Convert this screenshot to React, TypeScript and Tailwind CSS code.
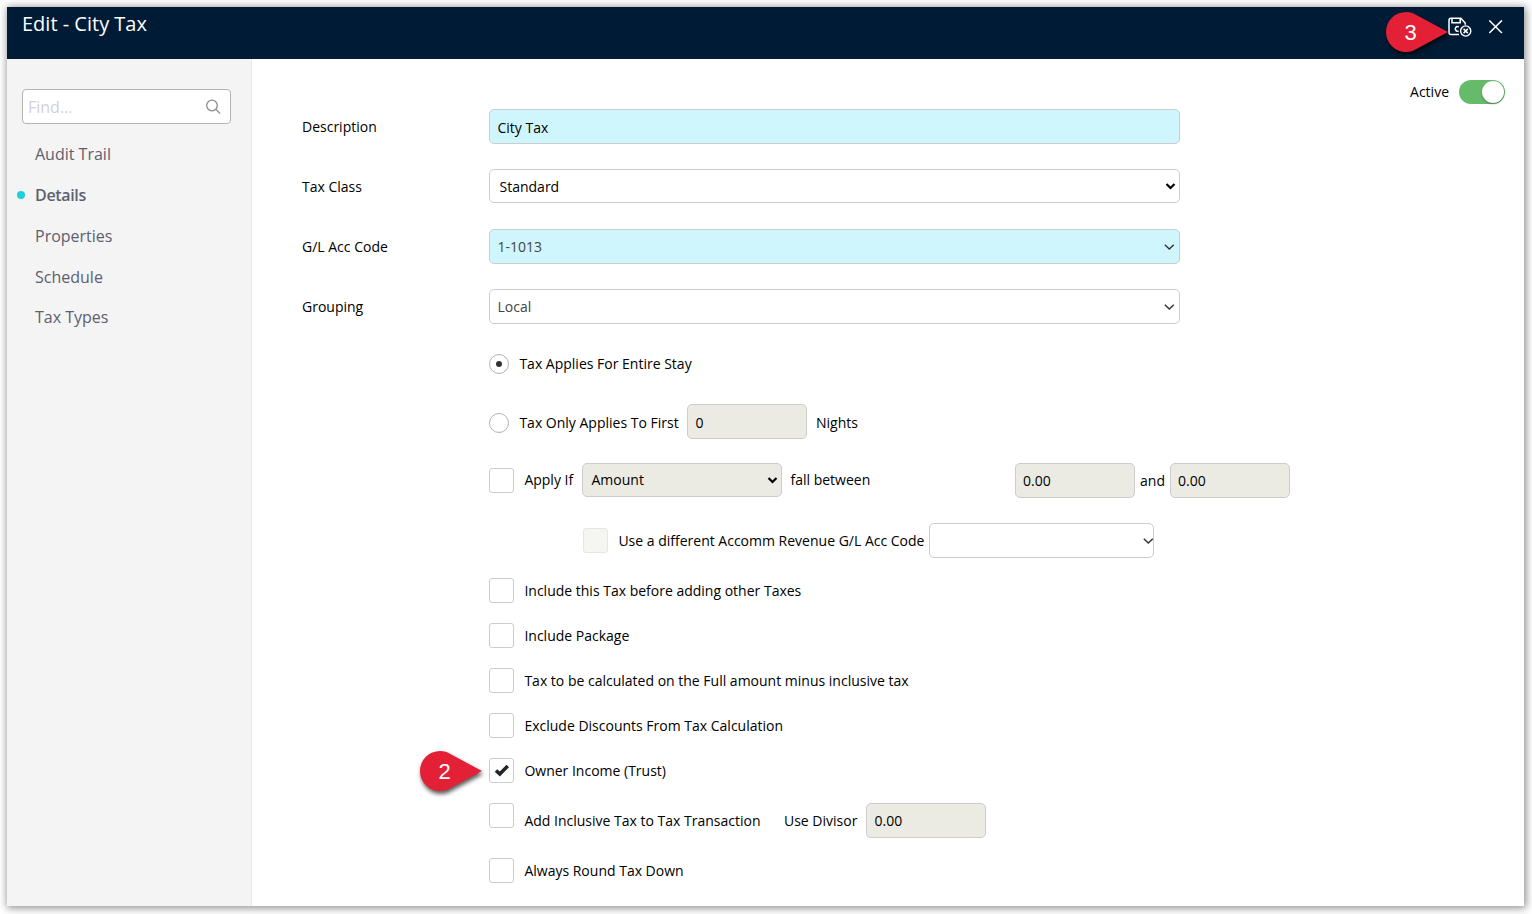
import type { ReactNode } from 'react'

const menu = ['Audit Trail', 'Details', 'Properties', 'Schedule', 'Tax Types']

function Pin({ label, className }: { label: string; className: string }) {
  return (
    <div className={`absolute h-10 w-[63px] ${className}`}>
      <svg
        viewBox="0 0 63 40"
        className="absolute inset-0 h-10 w-[63px] overflow-visible drop-shadow-[1px_3px_2px_rgba(0,0,0,0.65)]"
      >
        <path
          d="M62 20 L29 2.200 C26.500 0.800 23.500 0 20 0 A20 20 0 0 0 20 40 C23.500 40 26.500 39.200 29 37.800 Z"
          fill="#e32036"
        />
      </svg>
      <span className="relative block w-[49px] text-center font-['Liberation_Sans',sans-serif] text-[22px] leading-[41px] text-white">
        {label}
      </span>
    </div>
  )
}

function SaveCloseIcon() {
  return (
    <svg width="24" height="22" viewBox="0 0 24 22" fill="none" stroke="#fff" strokeWidth="1.500">
      <path d="M11 17.500H3C1.700 17.500 1 16.800 1 15.500V3.200C1 1.900 1.700 1.200 3 1.200h9.800L17.200 6v1.700" />
      <path d="M4 1.500v4.200h8.200V1.500" />
      <path d="M10.600 10.100a2 2.300 0 1 0 0 3.600" strokeWidth="1.500" />
      <circle cx="17.700" cy="14" r="5.100" strokeWidth="1.400" />
      <path d="M15.600 11.900l4.200 4.200M19.800 11.900l-4.200 4.200" strokeWidth="1.500" />
    </svg>
  )
}

function Chevron({ bold, className = '' }: { bold?: boolean; className?: string }) {
  return (
    <svg
      width="12"
      height="8"
      viewBox="0 0 12 8"
      fill="none"
      stroke={bold ? '#000' : '#333'}
      strokeWidth={bold ? 2.2 : 1.4}
      className={`shrink-0 ${className}`}
    >
      <path d={bold ? 'M2.500 2l4 4 4-4' : 'M1.800 1.700l4.500 4.300 4.500-4.300'} />
    </svg>
  )
}

function Field({ label, children }: { label: string; children: ReactNode }) {
  return (
    <div className="flex h-[35px]">
      <label className="w-[187px] leading-[35px]">{label}</label>
      {children}
    </div>
  )
}

function Box({ className, children }: { className: string; children?: ReactNode }) {
  return (
    <div className={`flex h-[35px] items-center rounded-[5px] border border-[#ccc] ${className}`}>
      {children}
    </div>
  )
}

function Check({ checked, disabled }: { checked?: boolean; disabled?: boolean }) {
  return (
    <span
      className={`flex size-[25px] shrink-0 items-center justify-center rounded-[3px] border ${
        disabled ? 'border-[#e6e6e6] bg-[#f5f5f1]' : 'border-[#ccc] bg-white'
      }`}
    >
      {checked && (
        <svg width="15" height="13" viewBox="0 0 15 13" fill="none" stroke="#212529" strokeWidth="3.600">
          <path d="M2 6.500L5.800 10.100L13.800 2" />
        </svg>
      )}
    </span>
  )
}

function CheckRow({ label, checked, pin }: { label: string; checked?: boolean; pin?: string }) {
  return (
    <div className="relative mt-5 flex h-[25px] items-center">
      {pin && <Pin label={pin} className="-left-[69px] -top-[7px]" />}
      <Check checked={checked} />
      <span className="ml-[10.400px]">{label}</span>
    </div>
  )
}

function Radio({ checked }: { checked?: boolean }) {
  return (
    <span className="flex size-5 shrink-0 items-center justify-center rounded-full border border-[#b3b3b3]">
      {checked && <span className="size-1.5 rounded-full bg-[#333]" />}
    </span>
  )
}

export default function App() {
  return (
    <div className="h-[914px] w-[1532px] overflow-hidden bg-white p-[7px] font-['Open_Sans',sans-serif] text-sm text-black">
      <div className="flex h-[899px] w-[1517px] flex-col bg-white shadow-[1px_1px_8px_1px_rgba(0,0,0,0.450)]">
        <header className="relative flex h-[52px] shrink-0 justify-between bg-[#001b35] pl-[15px] text-white">
          <h1 className="text-xl leading-[34px]">Edit - City Tax</h1>
          <div className="flex pr-[21px] pt-[10px]">
            <SaveCloseIcon />
            <svg width="14" height="14" viewBox="0 0 14 14" stroke="#fff" strokeWidth="1.500" className="ml-[17px] mt-[3px]">
              <path d="M0.300 0.400l12.600 12.600M12.900 0.400L0.300 13" />
            </svg>
          </div>
          <Pin label="3" className="left-[1379px] top-[5px]" />
        </header>

        <div className="flex min-h-0 flex-1">
          <aside className="w-[245px] shrink-0 border-r border-[#e8e8e8] bg-[#f4f4f4] pl-[15px] pt-[30px]">
            <div className="flex h-[35px] w-[209px] items-center justify-between rounded-[4px] border border-[#b3b3b3] bg-white pl-[5px] pr-[9px] text-base text-[#d2d2d2]">
              Find...
              <svg width="15" height="15" viewBox="0 0 15 15" fill="none" stroke="#8c8c8c" strokeWidth="1.300">
                <circle cx="6" cy="6.500" r="5.300" />
                <path d="M9.900 10.400L14 14.500" />
              </svg>
            </div>
            <nav className="mt-[10px] text-base text-[#5c6070]">
              {menu.map((item) => (
                <a key={item} className="relative flex h-[40.750px] items-center pl-[13px]">
                  {item === 'Details' && (
                    <span className="absolute -left-[5px] size-2 rounded-full bg-[#1fcfd9]" />
                  )}
                  <span className={item === 'Details' ? 'font-semibold tracking-[-0.350px]' : ''}>{item}</span>
                </a>
              ))}
            </nav>
          </aside>

          <main className="relative flex-1 pl-[50px] pt-[50px]">
            <div className="absolute right-[19px] top-[21px] flex items-center gap-[10px]">
              Active
              <span className="flex h-6 w-[46px] items-center justify-end rounded-full bg-[#66bb6a] pr-px">
                <span className="size-[22px] rounded-full bg-white shadow-[0_1px_2px_rgba(0,0,0,0.350)]" />
              </span>
            </div>

            <div className="flex flex-col gap-[25px]">
              <Field label="Description">
                <Box className="w-[691px] bg-[#cff6fc] pl-[7.500px] pt-0.5">City Tax</Box>
              </Field>
              <Field label="Tax Class">
                <Box className="!h-[34px] w-[691px] justify-between pl-[9.500px] pr-[3px]">
                  <span className="pt-px">Standard</span>
                  <Chevron bold />
                </Box>
              </Field>
              <Field label="G/L Acc Code">
                <Box className="w-[691px] justify-between bg-[#cff6fc] pl-[7.500px] pr-1 text-[#444]">
                  1-1013
                  <Chevron />
                </Box>
              </Field>
              <Field label="Grouping">
                <Box className="w-[691px] justify-between pl-[7.500px] pr-1 text-[#444]">
                  Local
                  <Chevron />
                </Box>
              </Field>
            </div>

            <div className="ml-[187px]">
              <div className="mt-[30px] flex h-5 items-center gap-[10.400px]">
                <Radio checked />
                Tax Applies For Entire Stay
              </div>
              <div className="mt-[30px] flex h-[35px] items-center">
                <div className="flex w-[198px] items-center gap-[10.400px] pt-[3px]">
                  <Radio />
                  Tax Only Applies To First
                </div>
                <Box className="w-[120px] bg-[#ebebe4] pl-[7.500px] pt-0.5">0</Box>
                <span className="ml-[9px] pt-0.5">Nights</span>
              </div>

              <div className="mt-6 flex h-[35px]">
                <div className="flex w-[93px] items-center gap-[10.400px]">
                  <Check />
                  <span className="-mt-0.5">Apply If</span>
                </div>
                <Box className="!h-[34px] w-[200px] justify-between bg-[#ebebe4] pl-[8.500px] pr-[3px]">
                  Amount
                  <Chevron bold />
                </Box>
                <span className="ml-[8.500px] w-[224.500px] leading-[34px]">fall between</span>
                <Box className="w-[120px] bg-[#ebebe4] pl-[7px]">0.00</Box>
                <span className="w-[35px] text-center leading-[35px]">and</span>
                <Box className="w-[120px] bg-[#ebebe4] pl-[7px]">0.00</Box>
              </div>

              <div className="ml-[94px] mt-[25px] flex h-[35px] items-center">
                <Check disabled />
                <span className="ml-[10.400px] w-[310.600px]">Use a different Accomm Revenue G/L Acc Code</span>
                <Box className="w-[225px] justify-end">
                  <Chevron className="-mr-px" />
                </Box>
              </div>

              <CheckRow label="Include this Tax before adding other Taxes" />
              <CheckRow label="Include Package" />
              <CheckRow label="Tax to be calculated on the Full amount minus inclusive tax" />
              <CheckRow label="Exclude Discounts From Tax Calculation" />
              <CheckRow label="Owner Income (Trust)" checked pin="2" />

              <div className="mt-5 flex h-[35px]">
                <Check />
                <span className="ml-[10.400px] w-[259.600px] leading-[35px]">Add Inclusive Tax to Tax Transaction</span>
                <span className="w-[82px] leading-[35px]">Use Divisor</span>
                <Box className="w-[120px] bg-[#ebebe4] pl-[7.500px]">0.00</Box>
              </div>
              <CheckRow label="Always Round Tax Down" />
            </div>
          </main>
        </div>
      </div>
    </div>
  )
}
